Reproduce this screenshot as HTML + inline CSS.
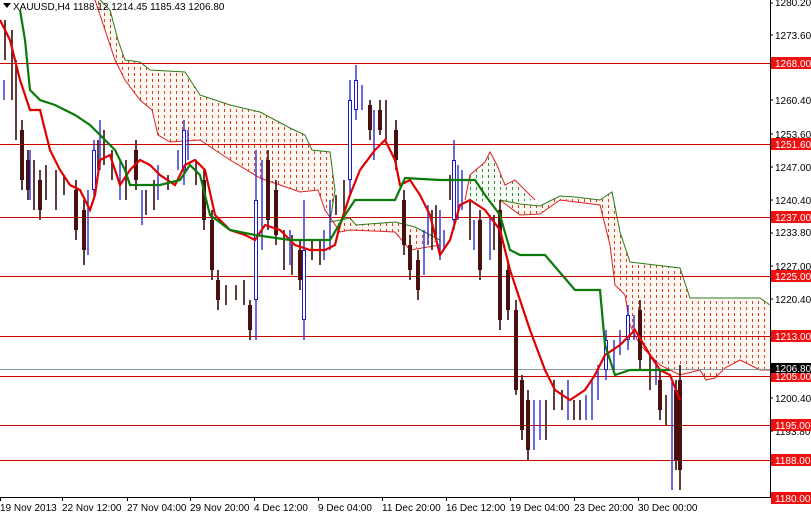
<!DOCTYPE html>
<html><head><meta charset="utf-8"><style>
html,body{margin:0;padding:0;background:#fff;}
svg{display:block;font-family:"Liberation Sans",sans-serif;}
</style></head><body>
<svg width="811" height="516" viewBox="0 0 811 516" xmlns="http://www.w3.org/2000/svg">
<defs>
<pattern id="pr" width="6" height="6" patternUnits="userSpaceOnUse">
<rect width="6" height="6" fill="#fff8f2"/><rect x="2" y="1" width="1" height="3" fill="#d84020"/></pattern>
<pattern id="pg" width="6" height="6" patternUnits="userSpaceOnUse">
<rect width="6" height="6" fill="#f6fbf6"/><rect x="2" y="1" width="1" height="3" fill="#3a8a3a"/></pattern>
</defs>
<rect width="811" height="516" fill="#fff"/>
<polygon fill="url(#pr)" points="100,0 110,10 118,40 125,60 140,62 150,70 185,72 200,95 230,105 260,112 290,128 305,135 312,150 330,152 335,190 330,222 350,218 356,225 395,222 415,227 440,240 410,250 395,232 350,230 340,232 325,210 318,190 300,192 260,178 230,160 200,140 170,142 158,135 152,110 140,100 125,80 115,60 105,30 95,0"/>
<polyline fill="none" stroke="#2a7a1a" stroke-width="1" points="100,0 110,10 118,40 125,60 140,62 150,70 185,72 200,95 230,105 260,112 290,128 305,135 312,150 330,152 335,190 330,222 350,218 356,225 395,222 415,227 440,240"/>
<polyline fill="none" stroke="#e02020" stroke-width="1" points="95,0 105,30 115,60 125,80 140,100 152,110 158,135 170,142 200,140 230,160 260,178 300,192 318,190 325,210 340,232 350,230 395,232 410,250 440,245"/>
<polygon fill="url(#pg)" points="465,200 470,175 485,162 490,152 497,165 505,185 515,180 525,190 535,200 505,203"/>
<polyline fill="none" stroke="#e02020" stroke-width="1" points="465,200 470,175 485,162 490,152 497,165 505,185 515,180 525,190 535,200"/>
<polygon fill="url(#pr)" points="500,200 520,204 540,206 560,196 575,197 600,200 612,192 620,232 630,262 680,268 690,298 760,298 770,305 770,370 760,370 740,360 725,368 715,378 706,380 700,370 680,375 660,365 640,345 630,325 625,295 615,285 610,245 605,225 600,205 560,200 540,214 520,215"/>
<polyline fill="none" stroke="#2a7a1a" stroke-width="1" points="500,200 520,204 540,206 560,196 575,197 600,200 612,192 620,232 630,262 680,268 690,298 760,298 770,305"/>
<polyline fill="none" stroke="#e02020" stroke-width="1" points="500,200 520,215 540,214 560,200 600,205 605,225 610,245 615,285 625,295 630,325 640,345 660,365 680,375 700,370 706,380 715,378 725,368 740,360 760,370 770,370"/>
<g stroke="#d00000" stroke-width="1">
<line x1="0" y1="63.5" x2="770" y2="63.5"/><line x1="0" y1="144.5" x2="770" y2="144.5"/>
<line x1="0" y1="217.5" x2="770" y2="217.5"/><line x1="0" y1="276.5" x2="770" y2="276.5"/>
<line x1="0" y1="336.5" x2="770" y2="336.5"/><line x1="0" y1="376.5" x2="770" y2="376.5"/>
<line x1="0" y1="425.5" x2="770" y2="425.5"/><line x1="0" y1="460.5" x2="770" y2="460.5"/>
</g>
<line x1="0" y1="369.5" x2="770" y2="369.5" stroke="#8a9aa8"/>
<path fill="none" stroke="#3a0c0c" stroke-width="1.6" d="M5 20V60M12 30V100M16 60V140M22 120V190M28 150V200M34 160V210M40 170V220M46 165V200M56 170V210M64 175V195M76 180V240M84 200V265M98 140V170M104 130V165M112 150V180M126 160V200M136 140V190M146 190V215M154 180V210M168 175V190M196 160V185M204 170V230M212 210V280M218 270V310M226 285V305M236 285V300M244 280V305M250 300V340M268 150V230M276 180V245M284 230V270M292 235V275M300 240V290M312 240V260M320 240V265M336 195V215M344 180V215M370 100V140M380 100V135M386 100V140M396 120V170M404 190V255M410 235V280M418 250V300M432 210V250M436 205V240M450 175V200M470 200V240M480 210V280M494 215V250M500 200V330M508 260V320M516 300V395M522 375V440M528 390V460M546 400V440M554 380V410M562 390V410M574 400V420M580 400V420M640 300V370M650 355V390M660 370V420M666 395V425M676 380V470M680 365V490"/>
<path fill="none" stroke="#4a1010" stroke-width="4" d="M22 130V180M28 160V190M40 180V210M76 190V230M84 210V250M136 150V180M204 180V220M212 220V270M218 280V300M250 305V330M268 160V220M276 190V235M300 250V280M370 105V130M380 110V130M396 130V160M404 200V245M410 245V270M418 260V290M480 220V270M500 210V320M508 270V310M516 310V390M522 380V430M528 400V450M640 310V360M660 380V410M676 390V460M680 380V470"/>
<path fill="none" stroke="#1a1ad0" stroke-width="1.3" d="M4 80V100M30 150V200M88 190V255M94 140V200M100 120V170M120 160V200M142 190V225M158 165V200M178 150V170M184 120V185M188 130V160M256 150V340M262 160V250M290 230V265M304 200V340M324 230V260M330 200V250M350 80V195M356 65V120M362 85V110M374 110V160M424 230V275M428 205V245M440 210V260M444 230V250M454 140V230M458 165V220M462 170V210M474 220V250M490 215V260M534 400V450M540 400V440M568 380V420M586 395V420M592 380V420M598 365V400M606 330V380M614 340V370M620 330V355M628 305V350M634 315V340M656 360V385M672 380V490"/>
<path fill="none" stroke="#1a1ad0" stroke-width="4" d="M256 200V300M304 250V320M350 100V180M356 80V110M454 160V220M606 340V370M628 315V340M94 150V190M184 130V170"/>
<path fill="none" stroke="#fff" stroke-width="2" d="M256 201V299M304 251V319M350 101V179M356 81V109M454 161V219M606 341V369M628 316V339M94 151V189M184 131V169"/>
<polyline fill="none" stroke="#e00000" stroke-width="2.2" points="0,20 10,40 20,80 30,110 40,110 50,150 60,170 70,185 80,190 90,210 95,195 100,160 110,155 120,185 130,170 140,160 150,165 160,175 175,185 185,165 195,160 205,170 215,215 230,230 245,235 255,240 265,225 280,230 295,245 310,250 325,250 335,245 340,225 350,195 360,170 375,150 385,140 395,160 400,185 410,180 420,195 430,215 440,255 450,240 460,205 470,200 485,210 500,230 510,270 520,300 530,330 545,370 555,390 570,400 585,390 595,375 605,355 620,345 635,330 650,355 660,370 670,375 680,400"/>
<polyline fill="none" stroke="#0a7a0a" stroke-width="2.2" points="20,10 25,40 30,90 40,100 55,105 75,115 90,125 105,140 115,150 125,170 130,185 160,185 180,180 190,165 200,175 210,215 230,230 255,235 290,240 330,240 345,215 355,200 395,200 405,178 440,180 475,180 485,195 500,215 510,250 520,255 545,255 575,290 600,290 605,345 615,375 630,370 645,370 665,370 670,370"/>
<line x1="770.5" y1="0" x2="770.5" y2="497" stroke="#000"/>
<line x1="0" y1="497.5" x2="771" y2="497.5" stroke="#000"/>
<g font-size="10" fill="#000">
<text x="775" y="6">1280.20</text><text x="775" y="39">1273.60</text>
<text x="775" y="104">1260.40</text><text x="775" y="138">1253.60</text>
<text x="775" y="171">1247.00</text><text x="775" y="204">1240.40</text>
<text x="775" y="236">1233.80</text><text x="775" y="270">1227.00</text>
<text x="775" y="303">1220.40</text><text x="775" y="402">1200.40</text>
<text x="775" y="435">1193.80</text>
</g>
<g fill="#ee1111">
<rect x="771" y="57" width="40" height="12"/><rect x="771" y="138" width="40" height="12"/>
<rect x="771" y="211" width="40" height="12"/><rect x="771" y="270" width="40" height="12"/>
<rect x="771" y="330" width="40" height="12"/><rect x="771" y="370" width="40" height="12"/>
<rect x="771" y="419" width="40" height="12"/><rect x="771" y="454" width="40" height="12"/>
<rect x="771" y="492" width="40" height="12"/>
</g>
<rect x="771" y="363" width="40" height="10" fill="#000"/>
<g font-size="10" fill="#fff">
<text x="775" y="67">1268.00</text><text x="775" y="148">1251.60</text>
<text x="775" y="221">1237.00</text><text x="775" y="280">1225.00</text>
<text x="775" y="340">1213.00</text><text x="775" y="372">1206.80</text>
<text x="775" y="380">1205.00</text><text x="775" y="429">1195.00</text>
<text x="775" y="464">1188.00</text><text x="775" y="502">1180.00</text>
</g>
<g stroke="#000"><line x1="770" y1="3" x2="773" y2="3"/><line x1="770" y1="35" x2="773" y2="35"/><line x1="770" y1="100" x2="773" y2="100"/><line x1="770" y1="134" x2="773" y2="134"/><line x1="770" y1="167" x2="773" y2="167"/><line x1="770" y1="200" x2="773" y2="200"/><line x1="770" y1="233" x2="773" y2="233"/><line x1="770" y1="266" x2="773" y2="266"/><line x1="770" y1="299" x2="773" y2="299"/><line x1="770" y1="398" x2="773" y2="398"/><line x1="770" y1="431" x2="773" y2="431"/></g>
<g font-size="10" fill="#000">
<text x="0" y="511">19 Nov 2013</text><text x="62" y="511">22 Nov 12:00</text>
<text x="127" y="511">27 Nov 04:00</text><text x="190" y="511">29 Nov 20:00</text>
<text x="254" y="511">4 Dec 12:00</text><text x="318" y="511">9 Dec 04:00</text>
<text x="382" y="511">11 Dec 20:00</text><text x="446" y="511">16 Dec 12:00</text>
<text x="510" y="511">19 Dec 04:00</text><text x="574" y="511">23 Dec 20:00</text>
<text x="638" y="511">30 Dec 00:00</text>
</g>
<g stroke="#000"><line x1="0.5" y1="497" x2="0.5" y2="501"/><line x1="62.5" y1="497" x2="62.5" y2="501"/><line x1="127.5" y1="497" x2="127.5" y2="501"/><line x1="190.5" y1="497" x2="190.5" y2="501"/><line x1="254.5" y1="497" x2="254.5" y2="501"/><line x1="318.5" y1="497" x2="318.5" y2="501"/><line x1="382.5" y1="497" x2="382.5" y2="501"/><line x1="446.5" y1="497" x2="446.5" y2="501"/><line x1="510.5" y1="497" x2="510.5" y2="501"/><line x1="574.5" y1="497" x2="574.5" y2="501"/><line x1="638.5" y1="497" x2="638.5" y2="501"/></g>
<polygon points="3,3 11,3 7,8" fill="#000"/>
<text x="13" y="10" font-size="10" fill="#000">XAUUSD,H4  1188.12 1214.45 1185.43 1206.80</text>
</svg>
</body></html>
